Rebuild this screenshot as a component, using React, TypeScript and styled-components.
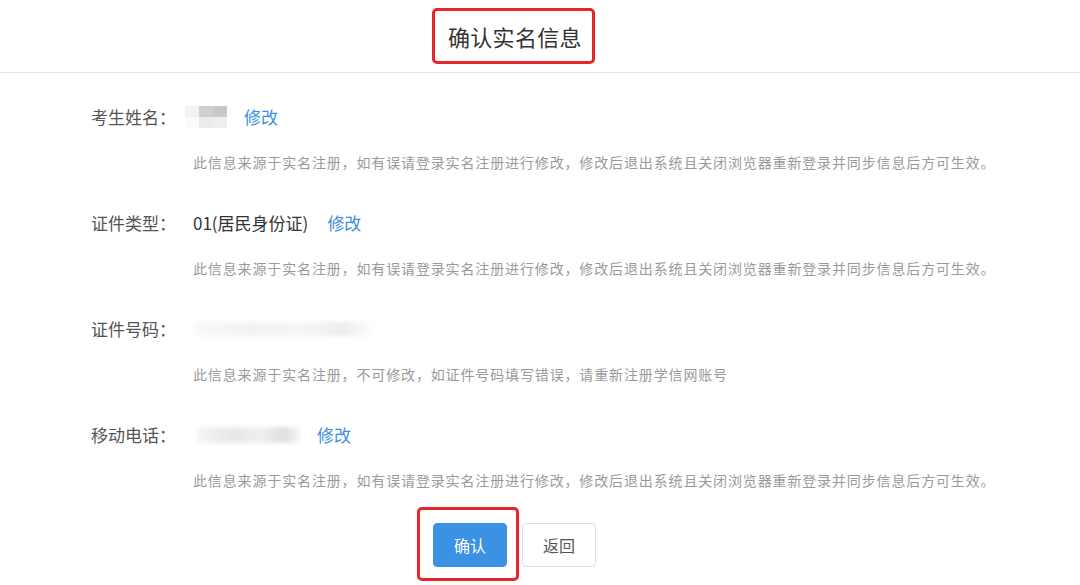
import React from "react";
import styled, { createGlobalStyle } from "styled-components";

const Global = createGlobalStyle`
  html, body { margin: 0; padding: 0; background: #fff; }
  body { font-family: "Noto Sans CJK SC", "Noto Sans", sans-serif; }
  * { box-sizing: border-box; }
`;

const Page = styled.div`
  width: 1080px;
  height: 585px;
  overflow: hidden;
  background: #fff;
  display: flex;
  flex-direction: column;
`;

const Header = styled.header`
  height: 73px;
  border-bottom: 1px solid #e6e6e6;
  box-shadow: 0 1px 2px rgba(0, 0, 0, 0.03);
  display: flex;
  align-items: flex-start;
  padding: 8px 0 0 432px;
`;

const Highlight = styled.div<{ $w: number; $h: number; $pad: string }>`
  width: ${(p) => p.$w}px;
  height: ${(p) => p.$h}px;
  border: 3px solid #e8232a;
  border-radius: 5px;
  display: flex;
  align-items: center;
  padding: ${(p) => p.$pad};
`;

const Title = styled.h1`
  margin: 0;
  font-size: 22px;
  font-weight: 400;
  color: #333;
  letter-spacing: 0.3px;
  line-height: 1;
`;

const Body = styled.main`
  display: flex;
  flex-direction: column;
  padding: 32px 0 0 91px;
`;

const Field = styled.section`
  display: flex;
  flex-direction: column;
  gap: 23px;
  margin-bottom: 39px;
  &:last-of-type { margin-bottom: 32px; }
`;

const Line = styled.div`
  display: flex;
  align-items: center;
  height: 24px;
`;

const Label = styled.span`
  width: 102px;
  flex-shrink: 0;
  font-size: 17px;
  color: #555;
  line-height: 24px;
`;

const Value = styled.span`
  font-size: 17px;
  color: #333;
  line-height: 24px;
`;

const Edit = styled.a<{ $ml: number }>`
  margin-left: ${(p) => p.$ml}px;
  font-size: 17px;
  color: #3d8fe0;
  line-height: 24px;
  text-decoration: none;
  cursor: pointer;
`;

const Note = styled.p`
  margin: 0 0 0 102px;
  font-size: 14px;
  letter-spacing: 0.86px;
  color: #9a9a9a;
  line-height: 20px;
  white-space: nowrap;
`;

const Mosaic = styled.span<{ $ml: number }>`
  margin-left: ${(p) => p.$ml}px;
  display: grid;
  grid-template-columns: repeat(3, 14px);
  grid-template-rows: repeat(2, 11px);
  filter: blur(0.6px);
`;

const Tile = styled.span<{ $c: string }>`
  background: ${(p) => p.$c};
`;

const Smear = styled.span<{ $ml: number; $w: number; $h: number; $dark: number }>`
  margin-left: ${(p) => p.$ml}px;
  width: ${(p) => p.$w}px;
  height: ${(p) => p.$h}px;
  border-radius: 3px;
  background: linear-gradient(
    90deg,
    rgba(0, 0, 0, ${(p) => p.$dark * 0.5}) 0%,
    rgba(0, 0, 0, ${(p) => p.$dark}) 35%,
    rgba(0, 0, 0, ${(p) => p.$dark * 0.7}) 60%,
    rgba(0, 0, 0, ${(p) => p.$dark * 1.4}) 85%,
    rgba(0, 0, 0, ${(p) => p.$dark * 0.4}) 100%
  );
  filter: blur(2px);
`;

const Actions = styled.div`
  display: flex;
  align-items: center;
  padding-left: 326px;
  margin-top: -15px;
`;

const Button = styled.button<{ $primary?: boolean }>`
  width: 74px;
  height: 44px;
  border-radius: 4px;
  font-family: inherit;
  font-size: 16px;
  cursor: pointer;
  border: 1px solid ${(p) => (p.$primary ? "#3b92e4" : "#dcdfe6")};
  background: ${(p) => (p.$primary ? "#3b92e4" : "#fff")};
  color: ${(p) => (p.$primary ? "#fff" : "#555")};
`;

const ReturnButton = styled(Button)`
  margin-left: 3px;
  margin-top: 2px;
`;

const PrimaryButton = styled(Button)`
  margin-top: 2px;
`;

const noteA =
  "此信息来源于实名注册，如有误请登录实名注册进行修改，修改后退出系统且关闭浏览器重新登录并同步信息后方可生效。";
const noteB = "此信息来源于实名注册，不可修改，如证件号码填写错误，请重新注册学信网账号";

export default function App() {
  return (
    <Page>
      <Global />
      <Header>
        <Highlight $w={163} $h={56} $pad="0 0 0 13px">
          <Title>确认实名信息</Title>
        </Highlight>
      </Header>
      <Body>
        <Field>
          <Line>
            <Label>考生姓名：</Label>
            <Mosaic $ml={-8}>
              <Tile $c="#f2f2f2" />
              <Tile $c="#cfcfcf" />
              <Tile $c="#c8c8c8" />
              <Tile $c="#fafafa" />
              <Tile $c="#ececec" />
              <Tile $c="#eeeeee" />
            </Mosaic>
            <Edit $ml={17}>修改</Edit>
          </Line>
          <Note>{noteA}</Note>
        </Field>
        <Field>
          <Line>
            <Label>证件类型：</Label>
            <Value>01(居民身份证)</Value>
            <Edit $ml={19}>修改</Edit>
          </Line>
          <Note>{noteA}</Note>
        </Field>
        <Field>
          <Line>
            <Label>证件号码：</Label>
            <Smear $ml={0} $w={176} $h={14} $dark={0.05} />
          </Line>
          <Note>{noteB}</Note>
        </Field>
        <Field>
          <Line>
            <Label>移动电话：</Label>
            <Smear $ml={5} $w={102} $h={16} $dark={0.09} />
            <Edit $ml={17}>修改</Edit>
          </Line>
          <Note>{noteA}</Note>
        </Field>
        <Actions>
          <Highlight $w={102} $h={74} $pad="0 0 0 13px">
            <PrimaryButton $primary>确认</PrimaryButton>
          </Highlight>
          <ReturnButton>返回</ReturnButton>
        </Actions>
      </Body>
    </Page>
  );
}
